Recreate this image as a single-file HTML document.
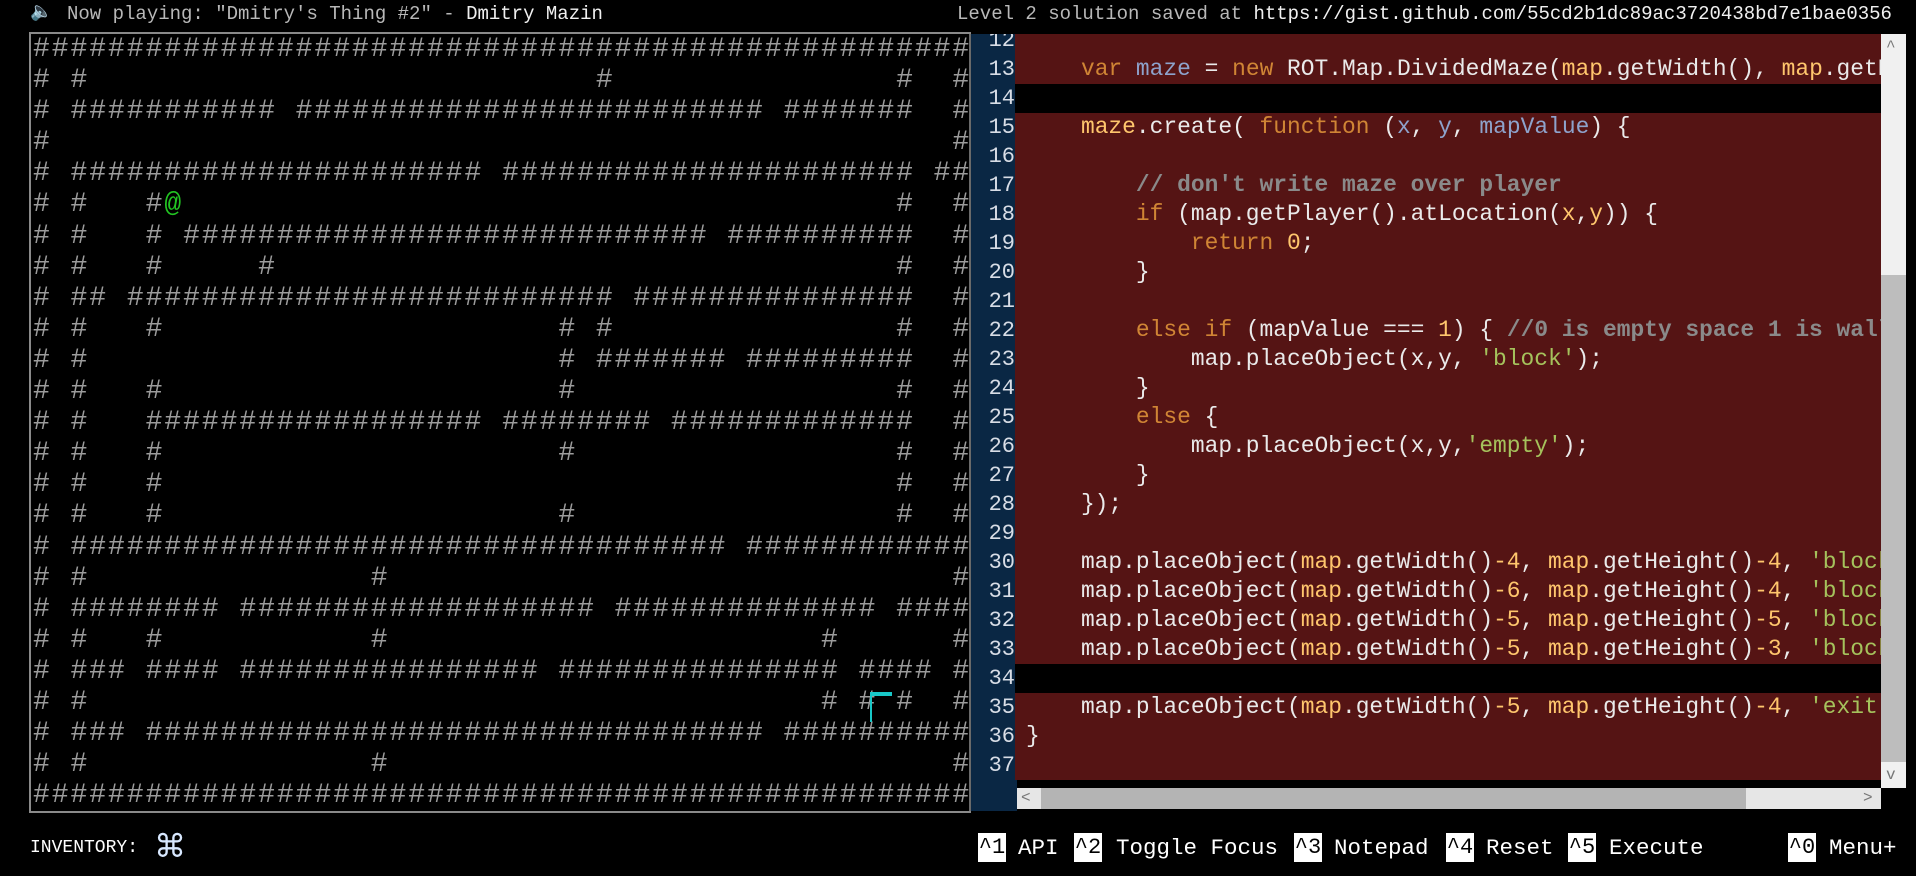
<!DOCTYPE html>
<html><head><meta charset="utf-8"><style>
*{margin:0;padding:0;box-sizing:border-box}
html,body{width:1916px;height:876px;background:#000;overflow:hidden;font-family:"Liberation Mono","DejaVu Sans Mono",monospace}
#top{position:absolute;top:0;left:0;width:1916px;height:28px;font-size:19px;line-height:28px;color:#b8b8b8;white-space:pre}
#top .w{color:#f0f0f0}
#map{position:absolute;left:29px;top:32px;width:942px;height:781px;border:2px solid #8a8a8a;background:#000}
#mapt{position:absolute;left:2px;top:0;font-size:28px;line-height:31.1px;letter-spacing:1.96px;color:#9c9c9c;white-space:pre}
.g{color:#22c422}
#code{position:absolute;left:969px;top:34px;width:937px;height:777px;background:#000;border-left:2px solid #6a6a6a;overflow:hidden}
#gut{position:absolute;left:0;top:0;width:46px;height:777px;background:#0a2744}
#lines{position:absolute;left:0;top:-8.5px;width:910px;height:780px;overflow:hidden}
.l{height:29.04px;line-height:29.04px;font-size:22.9px;white-space:pre;position:relative;background:#551414;color:#eaeaea}
.l.b{background:#000}
.n{position:absolute;left:0;width:44px;text-align:right;color:#d8dde6;background:#0a2744;font-size:22px}
.t{position:absolute;left:55px}
.k{color:#d08535}.v{color:#8ea3cc}.m{color:#ffc66d}.c{color:#8a8a8a;font-weight:bold}.s{color:#a5c25c}.p{color:#8ea3cc}
#vs{position:absolute;left:910px;top:0;width:25px;height:754px;background:#f0f0f0}
#vth{position:absolute;left:910px;top:241px;width:25px;height:487px;background:#bdbdbd}
#hs{position:absolute;left:46px;top:754px;width:864px;height:21px;background:#e6e6e6}
#hth{position:absolute;left:70px;top:754px;width:705px;height:21px;background:#b4b4b4}
.ar{position:absolute;color:#777;font-size:16px}
#bot{position:absolute;top:832px;left:0;width:1916px;height:32px;color:#fff;font-size:22.5px;line-height:32px;white-space:pre}
.key{position:absolute;top:1px;height:29px;background:#fff;color:#000;font-size:22px;line-height:29px;width:28px;text-align:center}
.lab{position:absolute;top:0}
</style></head><body>
<div id="top"><span style="position:absolute;left:30px;top:-1px;color:#ddd;font-size:18px">&#128264;</span><span style="position:absolute;left:67px">Now playing: "Dmitry's Thing #2" - <span class="w">Dmitry Mazin</span></span><span style="position:absolute;left:957px">Level 2 solution saved at <span class="w">https://gist.github.com/55cd2b1dc89ac3720438bd7e1bae0356</span></span></div>

<div id="map"><div id="mapt">##################################################
# #                           #               #  #
# ########### ######################### #######  #
#                                                #
# ###################### ###################### ##
# #   #<span class="g">@</span>                                      #  #
# #   # ############################ ##########  #
# #   #     #                                 #  #
# ## ########################## ###############  #
# #   #                     # #               #  #
# #                         # ####### #########  #
# #   #                     #                 #  #
# #   ################## ######## #############  #
# #   #                     #                 #  #
# #   #                                       #  #
# #   #                     #                 #  #
# ################################### ############
# #               #                              #
# ######## ################### ############## ####
# #   #           #                       #      #
# ### #### ################ ############### #### #
# #                                       # # #  #
# ### ################################# ##########
# #               #                              #
##################################################</div>
<div style="position:absolute;left:839px;top:658px;width:22px;height:4px;background:#18c8c8"></div>
<div style="position:absolute;left:839px;top:658px;width:2px;height:30px;background:#18c8c8"></div>
</div>

<div id="code">
<div id="lines">
<div class="l"><span class="n">12</span><span class="t"></span></div>
<div class="l"><span class="n">13</span><span class="t">    <span class="k">var</span> <span class="v">maze</span> = <span class="k">new</span> ROT.Map.DividedMaze(<span class="m">map</span>.getWidth(), <span class="m">map</span>.getHeight());</span></div>
<div class="l b"><span class="n">14</span></div>
<div class="l"><span class="n">15</span><span class="t">    <span class="m">maze</span>.create( <span class="k">function</span> (<span class="p">x</span>, <span class="p">y</span>, <span class="p">mapValue</span>) {</span></div>
<div class="l"><span class="n">16</span></div>
<div class="l"><span class="n">17</span><span class="t">        <span class="c">// don't write maze over player</span></span></div>
<div class="l"><span class="n">18</span><span class="t">        <span class="k">if</span> (map.getPlayer().atLocation(<span class="m">x</span>,<span class="m">y</span>)) {</span></div>
<div class="l"><span class="n">19</span><span class="t">            <span class="k">return</span> <span class="m">0</span>;</span></div>
<div class="l"><span class="n">20</span><span class="t">        }</span></div>
<div class="l"><span class="n">21</span></div>
<div class="l"><span class="n">22</span><span class="t">        <span class="k">else if</span> (mapValue === <span class="m">1</span>) { <span class="c">//0 is empty space 1 is wall</span></span></div>
<div class="l"><span class="n">23</span><span class="t">            map.placeObject(x,y, <span class="s">'block'</span>);</span></div>
<div class="l"><span class="n">24</span><span class="t">        }</span></div>
<div class="l"><span class="n">25</span><span class="t">        <span class="k">else</span> {</span></div>
<div class="l"><span class="n">26</span><span class="t">            map.placeObject(x,y,<span class="s">'empty'</span>);</span></div>
<div class="l"><span class="n">27</span><span class="t">        }</span></div>
<div class="l"><span class="n">28</span><span class="t">    });</span></div>
<div class="l"><span class="n">29</span></div>
<div class="l"><span class="n">30</span><span class="t">    map.placeObject(<span class="m">map</span>.getWidth()<span class="m">-4</span>, <span class="m">map</span>.getHeight()<span class="m">-4</span>, <span class="s">'block'</span>);</span></div>
<div class="l"><span class="n">31</span><span class="t">    map.placeObject(<span class="m">map</span>.getWidth()<span class="m">-6</span>, <span class="m">map</span>.getHeight()<span class="m">-4</span>, <span class="s">'block'</span>);</span></div>
<div class="l"><span class="n">32</span><span class="t">    map.placeObject(<span class="m">map</span>.getWidth()<span class="m">-5</span>, <span class="m">map</span>.getHeight()<span class="m">-5</span>, <span class="s">'block'</span>);</span></div>
<div class="l"><span class="n">33</span><span class="t">    map.placeObject(<span class="m">map</span>.getWidth()<span class="m">-5</span>, <span class="m">map</span>.getHeight()<span class="m">-3</span>, <span class="s">'block'</span>);</span></div>
<div class="l b"><span class="n">34</span></div>
<div class="l"><span class="n">35</span><span class="t">    map.placeObject(<span class="m">map</span>.getWidth()<span class="m">-5</span>, <span class="m">map</span>.getHeight()<span class="m">-4</span>, <span class="s">'exit'</span>);</span></div>
<div class="l"><span class="n">36</span><span class="t">}</span></div>
<div class="l"><span class="n">37</span></div>
</div>
<div style="position:absolute;left:0;top:746px;width:46px;height:31px;background:#0a2744"></div>
<div id="vs"></div><div id="vth"></div>
<span class="ar" style="left:915px;top:4px">^</span>
<span class="ar" style="left:915px;top:732px">v</span>
<div id="hs"></div><div id="hth"></div>
<span class="ar" style="left:50px;top:755px">&lt;</span>
<span class="ar" style="left:892px;top:755px">&gt;</span>
</div>

<div id="bot">
<span class="lab" style="left:30px;font-size:18px;top:0">INVENTORY:</span>
<span class="lab" style="left:154px;font-size:32px;top:-2px;color:#d8e8ff;font-family:'DejaVu Sans',sans-serif">&#8984;</span>
<span class="key" style="left:978px">^1</span><span class="lab" style="left:1018px">API</span>
<span class="key" style="left:1074px">^2</span><span class="lab" style="left:1116px">Toggle Focus</span>
<span class="key" style="left:1294px">^3</span><span class="lab" style="left:1334px">Notepad</span>
<span class="key" style="left:1446px">^4</span><span class="lab" style="left:1486px">Reset</span>
<span class="key" style="left:1568px">^5</span><span class="lab" style="left:1609px">Execute</span>
<span class="key" style="left:1788px">^0</span><span class="lab" style="left:1829px">Menu+</span>
</div>
</body></html>
